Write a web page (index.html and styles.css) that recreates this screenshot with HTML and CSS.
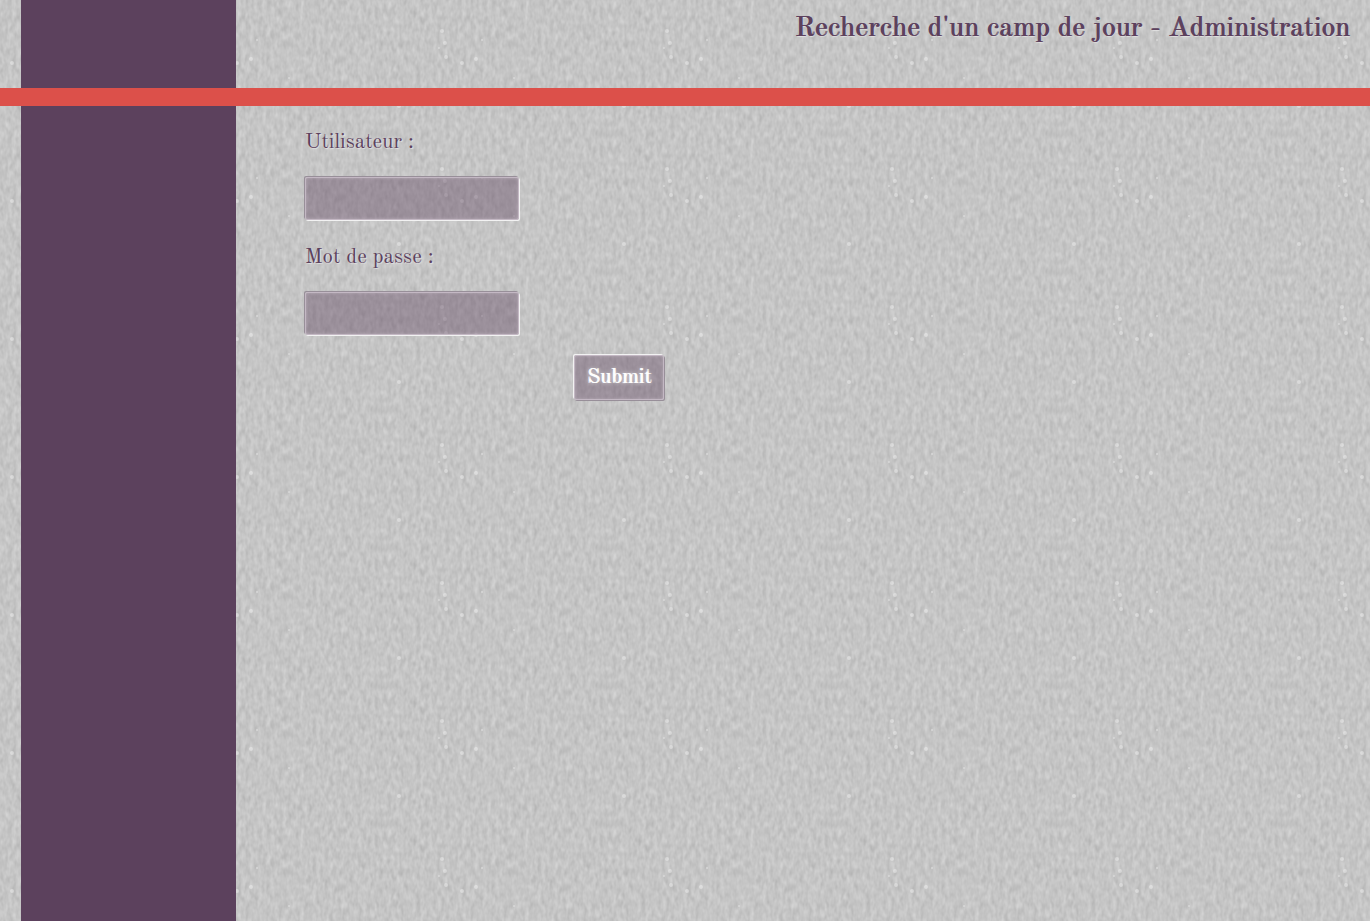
FILE: index.html
```html
<!DOCTYPE html>
<html lang="fr">
<head>
<meta charset="utf-8">
<title>Recherche d'un camp de jour - Administration</title>
<link rel="stylesheet" href="styles.css">
</head>
<body>
<div class="page">
  <aside class="sidebar"></aside>
  <header class="header">
    <h1 class="title">Recherche d'un camp de jour - Administration</h1>
  </header>
  <div class="rule"></div>
  <main class="content">
    <form class="login">
      <label class="label" for="user">Utilisateur :</label>
      <input class="field" id="user" name="user" type="text">
      <label class="label" for="password">Mot de passe :</label>
      <input class="field" id="password" name="password" type="password">
      <button class="submit" type="submit">Submit</button>
    </form>
  </main>
</div>
</body>
</html>
```
FILE: styles.css
```css
* {
  box-sizing: border-box;
}

body {
  margin: 0;
  color: #5c415d;
  font-family: "Old Standard TT", "Liberation Serif", serif;
  background-color: #c6c6c6;
  background-image: url("data:image/svg+xml,%3Csvg xmlns='http://www.w3.org/2000/svg' width='225' height='138'%3E%3Cfilter id='n' x='0' y='0' width='100%25' height='100%25' color-interpolation-filters='sRGB'%3E%3CfeTurbulence type='fractalNoise' baseFrequency='.24 .12' numOctaves='2' seed='4' stitchTiles='stitch'/%3E%3CfeColorMatrix values='.14 .06 0 0 .672 .14 .06 0 0 .672 .14 .06 0 0 .672 0 0 0 0 1'/%3E%3C/filter%3E%3Crect width='225' height='138' filter='url(%23n)'/%3E%3Cg fill='%23fff' fill-opacity='.35'%3E%3Ccircle cx='174' cy='106' r='2'/%3E%3Ccircle cx='217' cy='31' r='2'/%3E%3Ccircle cx='220' cy='43' r='2'/%3E%3Ccircle cx='214' cy='48' r='1'/%3E%3Ccircle cx='221' cy='57' r='2'/%3E%3Ccircle cx='32' cy='40' r='1'/%3E%3Ccircle cx='26' cy='59' r='2'/%3E%3Ccircle cx='64' cy='78' r='1'/%3E%3Ccircle cx='12' cy='63' r='2'/%3E%3C/g%3E%3C/svg%3E");
}

.page {
  display: grid;
  grid-template-columns: 21px 215px 1fr;
  grid-template-rows: 88px 18px 1fr;
  min-height: 100vh;
}

.sidebar {
  grid-area: 1 / 2 / 4 / 3;
  background: #5c415d;
}

.header {
  grid-area: 1 / 3 / 2 / 4;
  padding: 12px 20px;
  text-align: right;
}

.title {
  margin: 0;
  font-size: 28px;
  font-weight: normal;
  line-height: 34px;
  text-shadow: 1px 0 0 #5c415d, 1px 1px 1px #e2e2e2;
}

.rule {
  grid-area: 2 / 1 / 3 / 4;
  background: #dc504a;
}

.content {
  grid-area: 3 / 3 / 4 / 4;
  padding: 20px 68px;
}

.login {
  display: flex;
  flex-direction: column;
  align-items: flex-start;
  width: 360px;
}

.label {
  height: 51px;
  padding-left: 1px;
  font-size: 21px;
  line-height: 34px;
  text-shadow: 1px 1px 1px #e2e2e2;
}

.field,
.submit {
  border: 1px solid #c4b8c4;
  border-radius: 2px;
  background: rgba(92, 65, 93, 0.4);
  background-clip: padding-box;
  font-family: inherit;
}

.field {
  width: 214px;
  height: 43px;
  margin: 0 1px 21px;
  padding: 0 10px;
  color: #ffffff;
  font-size: 21px;
  box-shadow: -1px -1px 0 #988f99, 1px 1px 0 #f2f2f2, inset 0 0 3px #b9adb9;
}

.submit {
  align-self: flex-end;
  width: 90px;
  height: 45px;
  margin-top: -1px;
  padding: 1px 0 0;
  color: #ffffff;
  font-size: 21px;
  text-shadow: 1px 0 0 #ffffff, 0 0 4px #ffffff;
  box-shadow: -1px -1px 0 #f2f2f2, 1px 1px 0 #988f99, inset 0 0 3px #b9adb9;
}
```
